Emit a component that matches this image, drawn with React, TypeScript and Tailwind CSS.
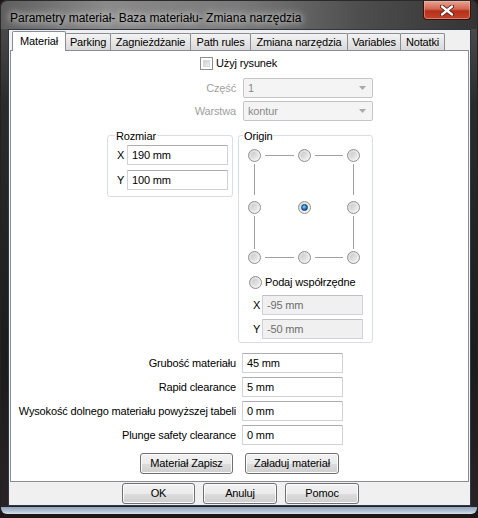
import React from "react";

const F = "font-['Liberation_Sans',Arial,sans-serif]";

function Btn({ w, children }: { w: string; children: React.ReactNode }) {
  return (
    <div
      className={`${w} h-full flex items-center justify-center border border-[#707070] rounded-[3px] bg-[linear-gradient(to_bottom,#f2f2f2_0%,#ebebeb_50%,#dddddd_51%,#cfcfcf_100%)] shadow-[inset_0_0_0_1px_#fcfcfc] text-[11px] text-black`}
    >
      {children}
    </div>
  );
}

function Radio({ checked = false }: { checked?: boolean }) {
  return (
    <div className="w-[13px] h-[13px] shrink-0 rounded-full border border-[#8e8f8f] bg-[linear-gradient(to_bottom_right,#d6d6d6,#f8f8f8)] flex items-center justify-center">
      <div
        className={
          checked
            ? "w-[7px] h-[7px] rounded-full bg-[radial-gradient(circle_at_40%_35%,#8fd0ff,#1b6fb3_60%,#0d3f70)] border border-[#0e3e6e]"
            : "w-[7px] h-[7px] rounded-full bg-[linear-gradient(to_bottom_right,#c9c9c9,#eeeeee)]"
        }
      />
    </div>
  );
}

function Input({ w, value, disabled = false }: { w: string; value: string; disabled?: boolean }) {
  return (
    <div
      className={`${w} h-[20px] shrink-0 flex items-center pl-[4px] border border-[#cfd3d9] border-t-[#abadb3] rounded-[1px] text-[11px] ${
        disabled ? "bg-[#f0f0f0] text-[#6d6d6d] border-[#c9c9c9] border-t-[#c0c0c0]" : "bg-white text-black"
      }`}
    >
      {value}
    </div>
  );
}

function Select({ value }: { value: string }) {
  return (
    <div className="w-[130px] h-[20px] shrink-0 flex items-center justify-between pl-[4px] pr-[6px] border border-[#c5c5c5] rounded-[2px] bg-[#f4f4f4] text-[11px] text-[#8a8a8a]">
      <span>{value}</span>
      <svg width="7" height="4" viewBox="0 0 7 4">
        <path d="M0 0 L7 0 L3.5 4 Z" fill="#a9a9a9" />
      </svg>
    </div>
  );
}

function Tab({ w, label, active = false, first = false }: { w: string; label: string; active?: boolean; first?: boolean }) {
  return (
    <div
      className={`${w} ${first ? "" : "-ml-px"} flex items-center justify-center border-l border-t border-r border-[#898c95] rounded-t-[2px] text-[11px] text-black ${
        active
          ? "h-[20px] -mb-px relative z-10 bg-white"
          : "h-[17px] bg-[linear-gradient(to_bottom,#f3f3f3,#e6e6e6_50%,#d9d9d9)]"
      }`}
    >
      <span className={active ? "-mt-[1px]" : ""}>{label}</span>
    </div>
  );
}

function Field({ label, value }: { label: string; value: string }) {
  return (
    <div className="flex items-center h-[20px] mt-[4px]">
      <div className="w-[225px] text-right text-[11px] text-black whitespace-nowrap">{label}</div>
      <div className="w-[6px]" />
      <Input w="w-[101px]" value={value} />
    </div>
  );
}

export default function App() {
  return (
    <div className={`w-[478px] h-[518px] bg-[#1d1516] overflow-hidden tracking-[-0.15px] ${F}`}>
      <div className="w-[478px] h-[514px] rounded-t-[7px] rounded-b-[6px] bg-[linear-gradient(to_bottom,#555_0%,#2b2b2b_20%,#1c1c1c_70%,#2a2325_100%)] flex flex-col shadow-[inset_0_0_0_1px_#222]">
        {/* Title bar */}
        <div className="h-[29px] shrink-0 flex items-start rounded-t-[7px] bg-[linear-gradient(to_right,#5e5e5e_0%,#8a8a8a_22%,#7a7a7a_50%,#4e4e4e_75%,#343434_100%)] border border-[#2a2a2a] border-b-0">
          <div className="pl-[9px] pt-[8px] text-[12px] tracking-normal text-black [text-shadow:0_0_6px_#e0e0e0,0_0_10px_#d0d0d0] whitespace-nowrap">
            Parametry materiał- Baza materiału- Zmiana narzędzia
          </div>
          <div className="flex-1" />
          <div className="mr-[6px] w-[48px] h-[19px] rounded-b-[4px] border border-[#3d0f08] border-t-0 bg-[linear-gradient(to_bottom,#e6a495_0%,#d4664f_45%,#b5301a_55%,#c2452c_100%)] shadow-[inset_0_0_0_1px_#f0b9ad80] flex items-center justify-center">
            <svg width="14" height="11" viewBox="0 0 14 11">
              <path d="M2 1.5 L12 9.5 M12 1.5 L2 9.5" stroke="#4a1208" strokeWidth="4" strokeLinecap="round" />
              <path d="M2 1.5 L12 9.5 M12 1.5 L2 9.5" stroke="#ffffff" strokeWidth="2.4" strokeLinecap="round" />
            </svg>
          </div>
        </div>

        {/* Client */}
        <div className="mx-[8px] w-[463px] border border-[#2e3844] bg-[#f0f0f0] flex flex-col">
          {/* Tabs */}
          <div className="mt-[1px] h-[19px] flex items-end pl-[3px]">
            <Tab w="w-[54px]" label="Materiał" active first />
            <Tab w="w-[46px]" label="Parking" />
            <Tab w="w-[81px]" label="Zagnieżdżanie" />
            <Tab w="w-[61px]" label="Path rules" />
            <Tab w="w-[98px]" label="Zmiana narzędzia" />
            <Tab w="w-[54px]" label="Variables" />
            <Tab w="w-[45px]" label="Notatki" />
          </div>

          {/* Panel */}
          <div className="ml-[1px] w-[459px] h-[432px] border border-[#898c95] bg-white flex flex-col">
            {/* Checkbox */}
            <div className="mt-[6px] ml-[189px] flex items-center h-[13px]">
              <div className="w-[13px] h-[13px] border border-[#8e8f8f] bg-white p-[2px]">
                <div className="w-full h-full bg-[linear-gradient(to_bottom_right,#cbcbcb,#f3f3f3)] border border-[#d8d8d8]" />
              </div>
              <span className="ml-[3px] text-[11px] text-black">Użyj rysunek</span>
            </div>

            {/* Selects */}
            <div className="mt-[8px] flex items-center h-[20px]">
              <div className="w-[225px] text-right text-[11px] text-[#a0a0a0]">Część</div>
              <div className="w-[7px]" />
              <Select value="1" />
            </div>
            <div className="mt-[3px] flex items-center h-[20px]">
              <div className="w-[225px] text-right text-[11px] text-[#a0a0a0]">Warstwa</div>
              <div className="w-[7px]" />
              <Select value="kontur" />
            </div>

            {/* Group boxes */}
            <div className="mt-[14px] flex items-start">
              {/* Rozmiar */}
              <div className="ml-[96px] w-[126px] h-[62px] relative border border-[#d5dfe5] rounded-[3px] flex flex-col pt-[9px]">
                <span className="absolute -top-[8px] left-[7px] px-[1px] bg-white text-[11px] text-black">Rozmiar</span>
                <div className="flex items-center h-[20px]">
                  <span className="w-[19px] pl-[9px] text-[11px] text-black">X</span>
                  <Input w="w-[101px]" value="190 mm" />
                </div>
                <div className="mt-[5px] flex items-center h-[20px]">
                  <span className="w-[19px] pl-[9px] text-[11px] text-black">Y</span>
                  <Input w="w-[101px]" value="100 mm" />
                </div>
              </div>

              {/* Origin */}
              <div className="ml-[5px] w-[135px] h-[208px] relative border border-[#d5dfe5] rounded-[3px] flex flex-col">
                <span className="absolute -top-[8px] left-[4px] px-[1px] bg-white text-[11px] text-black">Origin</span>
                <div className="ml-[9px] mt-[13px] w-[112px] flex flex-col">
                  <div className="flex items-center h-[13px]">
                    <Radio />
                    <div className="flex-1 mx-[4px] h-px bg-[#a0a0a0]" />
                    <Radio />
                    <div className="flex-1 mx-[4px] h-px bg-[#a0a0a0]" />
                    <Radio />
                  </div>
                  <div className="h-[39px] flex justify-between px-[6px] pt-[2px] pb-[6px]">
                    <div className="w-px h-full bg-[#a0a0a0]" />
                    <div className="w-px h-full bg-[#a0a0a0]" />
                  </div>
                  <div className="flex items-center justify-between h-[13px]">
                    <Radio />
                    <Radio checked />
                    <Radio />
                  </div>
                  <div className="h-[37px] flex justify-between px-[6px] pt-[2px] pb-[2px]">
                    <div className="w-px h-full bg-[#a0a0a0]" />
                    <div className="w-px h-full bg-[#a0a0a0]" />
                  </div>
                  <div className="flex items-center h-[13px]">
                    <Radio />
                    <div className="flex-1 mx-[4px] h-px bg-[#a0a0a0]" />
                    <Radio />
                    <div className="flex-1 mx-[4px] h-px bg-[#a0a0a0]" />
                    <Radio />
                  </div>
                </div>
                <div className="mt-[12px] ml-[10px] flex items-center h-[13px]">
                  <Radio />
                  <span className="ml-[3px] text-[11px] text-black">Podaj współrzędne</span>
                </div>
                <div className="mt-[6px] flex items-center h-[20px]">
                  <span className="w-[23px] pl-[14px] text-[11px] text-black">X</span>
                  <Input w="w-[101px]" value="-95 mm" disabled />
                </div>
                <div className="mt-[4px] flex items-center h-[20px]">
                  <span className="w-[23px] pl-[14px] text-[11px] text-black">Y</span>
                  <Input w="w-[101px]" value="-50 mm" disabled />
                </div>
              </div>
            </div>

            {/* Fields */}
            <div className="mt-[6px] flex flex-col">
              <Field label="Grubość materiału" value="45 mm" />
              <Field label="Rapid clearance" value="5 mm" />
              <Field label="Wysokość dolnego materiału powyższej tabeli" value="0 mm" />
              <Field label="Plunge safety clearance" value="0 mm" />
            </div>

            <div className="mt-[8px] ml-[129px] h-[21px] flex gap-[12px]">
              <Btn w="w-[93px]">Materiał Zapisz</Btn>
              <Btn w="w-[94px]">Załaduj materiał</Btn>
            </div>
          </div>

          {/* Bottom buttons */}
          <div className="mt-[1px] mb-[1px] h-[21px] ml-[113px] flex gap-[8px]">
            <Btn w="w-[73px]">OK</Btn>
            <Btn w="w-[74px]">Anuluj</Btn>
            <Btn w="w-[74px]">Pomoc</Btn>
          </div>
        </div>

        {/* Bottom frame */}
        <div className="mx-[1px] mt-[1px] flex-1 rounded-b-[6px] bg-[linear-gradient(to_bottom,#8ea3ba,#b4c4d6_60%,#d9e2ec)]" />
      </div>
    </div>
  );
}
